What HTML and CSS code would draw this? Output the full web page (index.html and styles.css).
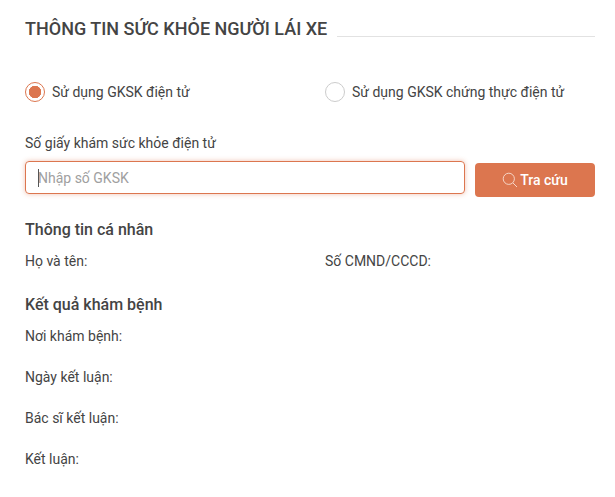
FILE: index.html
```html
<!DOCTYPE html>
<html lang="vi">

<head>
  <meta charset="UTF-8">
  <meta name="viewport" content="width=device-width, initial-scale=1.0">
  <title>Thông tin sức khỏe người lái xe</title>
  <link rel="stylesheet" href="styles.css">
</head>

<body>
  <div class="page">
    <!-- tieu de -->
    <div class="title-row">
      <h1>THÔNG TIN SỨC KHỎE NGƯỜI LÁI XE</h1>
      <div class="title-line"></div>
    </div>

    <!-- lua chon loai GKSK -->
    <div class="options">
      <label class="option">
        <span class="radio checked"></span>
        <span>Sử dụng GKSK điện tử</span>
      </label>
      <label class="option">
        <span class="radio"></span>
        <span>Sử dụng GKSK chứng thực điện tử</span>
      </label>
    </div>

    <label class="field-label" for="gksk">Số giấy khám sức khỏe điện tử</label>
    <div class="search-row">
      <div class="search-box">
        <span class="caret"></span>
        <input type="text" id="gksk" placeholder="Nhập số GKSK">
      </div>
      <button class="search-btn">
        <svg width="16" height="16" viewBox="0 0 16 16" fill="none" stroke="#f6d5c6" stroke-width="1">
          <circle cx="6.8" cy="6.8" r="5.6"></circle>
          <path d="M10.9 10.9 L15 15"></path>
        </svg>
        Tra cứu
      </button>
    </div>

    <h2 class="personal-title">Thông tin cá nhân</h2>
    <div class="two-cols">
      <div>Họ và tên:</div>
      <div>Số CMND/CCCD:</div>
    </div>

    <h2 class="result-title">Kết quả khám bệnh</h2>
    <div class="results">
      <div>Nơi khám bệnh:</div>
      <div>Ngày kết luận:</div>
      <div>Bác sĩ kết luận:</div>
      <div>Kết luận:</div>
    </div>
  </div>
</body>

</html>
```

FILE: styles.css
```css
body {
  margin: 0;
  background: #fff;
  color: #444;
  font-family: Roboto, "Liberation Sans", sans-serif;
  font-size: 14px;
  line-height: 18px;
}

.page {
  padding: 19px 20px 0 25px;
}

.title-row {
  display: flex;
  align-items: flex-end;
  gap: 10px;
}

h1 {
  margin: 0;
  font-size: 18px;
  line-height: 20px;
  font-weight: 500;
  color: #444;
}

.title-line {
  flex: 1;
  height: 1px;
  margin-bottom: 2px;
  background: #e2e2e2;
}

.options {
  display: flex;
  margin-top: 43px;
}

.option {
  display: flex;
  flex: 0 0 300px;
  align-items: center;
  gap: 7px;
}

.radio {
  width: 20px;
  height: 20px;
  box-sizing: border-box;
  border: 1px solid #ccc;
  border-radius: 50%;
  background: #fff;
}

.radio.checked {
  border-color: #dc764f;
  background: radial-gradient(circle, #dc764f 0, #dc764f 6px, #fff 6.5px);
}

.field-label {
  display: block;
  margin-top: 32px;
}

.search-row {
  display: flex;
  align-items: flex-start;
  gap: 10px;
  margin-top: 9px;
}

.search-box {
  position: relative;
  flex: 1;
  height: 33px;
  box-sizing: border-box;
  border: 1px solid #dc764f;
  border-radius: 4px;
  box-shadow: 0 0 5px rgba(220, 118, 79, 0.45);
}

.search-box input {
  width: 100%;
  height: 100%;
  box-sizing: border-box;
  padding: 0 12px;
  border: 0;
  background: transparent;
  outline: none;
  color: #444;
  font-family: inherit;
  font-size: 14px;
}

.search-box input::placeholder {
  color: #a0a0a0;
}

/* con tro nhap */
.caret {
  position: absolute;
  left: 12px;
  top: 7px;
  width: 1px;
  height: 18px;
  background: #555;
}

.search-btn {
  display: flex;
  align-items: center;
  justify-content: center;
  gap: 2px;
  width: 120px;
  height: 34px;
  margin-top: 2px;
  border: 0;
  border-radius: 4px;
  background: #dc764f;
  color: #fff;
  font-family: inherit;
  font-size: 14px;
  font-weight: 500;
}

h2 {
  margin: 0;
  font-size: 16px;
  line-height: 20px;
  font-weight: 500;
  color: #444;
}

.personal-title {
  margin-top: 23px;
}

.two-cols {
  display: flex;
  margin-top: 12px;
}

.two-cols div {
  flex: 0 0 300px;
}

.result-title {
  margin-top: 25px;
}

.results {
  display: flex;
  flex-direction: column;
  gap: 23px;
  margin-top: 12px;
}
```
